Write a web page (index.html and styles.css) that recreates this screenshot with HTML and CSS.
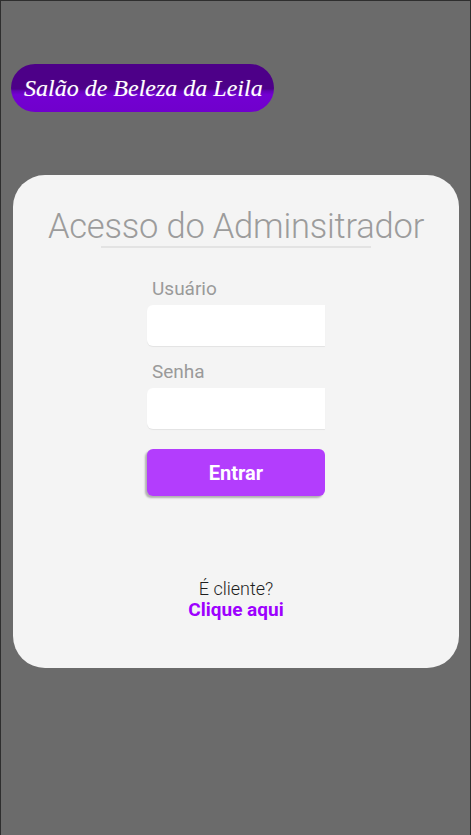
FILE: index.html
```html
<!DOCTYPE html>
<html lang="pt-BR">
<head>
<meta charset="utf-8">
<title>Salão de Beleza da Leila</title>
<link rel="stylesheet" href="styles.css">
</head>
<body>
<div class="page">
  <header class="top">
    <div class="brand">Salão de Beleza da Leila</div>
  </header>
  <main class="card">
    <h1 class="title">Acesso do Adminsitrador</h1>
    <form class="form">
      <label class="label" for="u">Usuário</label>
      <input class="input" id="u" type="text">
      <label class="label" for="s">Senha</label>
      <input class="input" id="s" type="password">
      <button class="btn" type="button">Entrar</button>
    </form>
    <div class="client">
      <div class="q">É cliente?</div>
      <a class="link" href="#">Clique aqui</a>
    </div>
  </main>
</div>
</body>
</html>
```
FILE: styles.css
```css
html, body {
  margin: 0;
  padding: 0;
  height: 100%;
}
body {
  background: #6b6b6b;
  font-family: Roboto, "Noto Sans", sans-serif;
}
.page {
  box-sizing: border-box;
  height: 835px;
  border-top: 1px solid #2e2e2e;
  border-left: 1px solid #2e2e2e;
  border-right: 1px solid #2e2e2e;
  padding: 63px 11px 0 10px;
}
.top {
  display: flex;
}
.brand {
  height: 48px;
  box-sizing: border-box;
  padding: 0 11px 0 13px;
  border-radius: 24px;
  background: linear-gradient(#4d0088 0%, #4d0088 52%, #6200b4 56%, #7300d2 64%, #7000cc 100%);
  color: #fff;
  font-family: "Liberation Serif", "DejaVu Serif", serif;
  font-style: italic;
  font-size: 24px;
  line-height: 48px;
  white-space: nowrap;
  text-shadow: 0 0 1px rgba(255,255,255,0.4);
}
.card {
  margin: 63px 0 0 2px;
  height: 493px;
  box-sizing: border-box;
  background: #f4f4f4;
  border-radius: 32px;
  padding-top: 28px;
  display: flex;
  flex-direction: column;
  align-items: center;
}
.title {
  margin: 0;
  font-weight: 300;
  font-size: 34.5px;
  line-height: 46px;
  color: #9c9c9c;
  letter-spacing: -0.2px;
  padding-bottom: 2px;
}
.title::after {
  content: "";
  display: block;
  height: 2px;
  width: 270px;
  background: #e3e3e3;
  margin: -3px 0 0 53px;
}
.form {
  margin-top: 27px;
  width: 178px;
  display: flex;
  flex-direction: column;
  align-items: stretch;
}
.label {
  font-size: 19px;
  line-height: 24px;
  color: #9a9a9a;
  padding-left: 5px;
  margin-bottom: 4px;
}
.input {
  height: 41px;
  box-sizing: border-box;
  border: none;
  background: #fff;
  border-radius: 6px 0 0 6px;
  box-shadow: 0 1px 1px rgba(0,0,0,0.07);
  margin: 0 0 14px;
  outline: none;
}
.btn {
  margin-top: 6px;
  height: 47px;
  border: none;
  border-radius: 6px;
  background: #b33dfd;
  color: #fff;
  font-family: Roboto, "Noto Sans", sans-serif;
  font-weight: 700;
  font-size: 20px;
  box-shadow: -2px 2px 2px rgba(0,0,0,0.28);
  cursor: pointer;
}
.client {
  margin-top: 83px;
  display: flex;
  flex-direction: column;
  align-items: center;
}
.q {
  font-size: 18px;
  font-weight: 300;
  color: #1e1e1e;
  line-height: 20px;
}
.link {
  font-size: 19px;
  font-weight: 700;
  color: #9d00ff;
  text-decoration: none;
  line-height: 22px;
}
```
